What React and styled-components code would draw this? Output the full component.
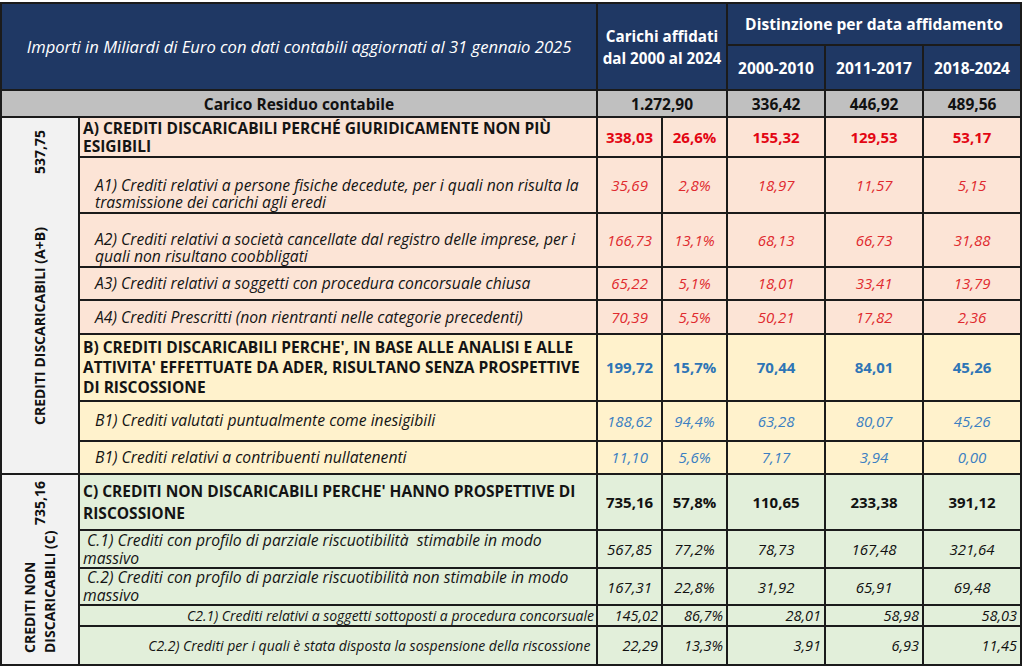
import React from "react";
import styled, { createGlobalStyle } from "styled-components";

const GlobalStyle = createGlobalStyle`
  html, body {
    margin: 0;
    padding: 0;
    background: #ffffff;
  }
  body {
    font-family: "Open Sans", "Liberation Sans", sans-serif;
    color: #111;
  }
`;

const fills = {
  A: "#fce4d6",
  B: "#fff2cc",
  C: "#e2efda",
};

const inks = {
  red: "#e30613",
  redSoft: "#e02a2f",
  blue: "#2e75b6",
  blueSoft: "#3b7fc2",
  ink: "#111111",
};

const groups = [
  {
    total: "537,75",
    label: ["CREDITI DISCARICABILI (A+B)"],
    height: 355,
    pad: [48, 12],
    rows: [
      {
        key: "A",
        fill: "A",
        head: true,
        h: 40,
        lh: 18,
        text: ["A) CREDITI DISCARICABILI PERCHÉ GIURIDICAMENTE NON PIÙ", "ESIGIBILI"],
        values: ["338,03", "26,6%", "155,32", "129,53", "53,17"],
        tone: "red",
      },
      {
        key: "A1",
        fill: "A",
        h: 55,
        valign: "bottom",
        text: [
          "A1) Crediti relativi a persone fisiche decedute, per i quali non risulta la",
          "trasmissione dei carichi agli eredi",
        ],
        values: ["35,69", "2,8%", "18,97", "11,57", "5,15"],
        tone: "redSoft",
      },
      {
        key: "A2",
        fill: "A",
        h: 54,
        valign: "bottom",
        text: [
          "A2) Crediti relativi a società cancellate dal registro delle imprese, per i",
          "quali non risultano coobbligati",
        ],
        values: ["166,73", "13,1%", "68,13", "66,73", "31,88"],
        tone: "redSoft",
      },
      {
        key: "A3",
        fill: "A",
        h: 33,
        text: ["A3) Crediti relativi a soggetti con procedura concorsuale chiusa"],
        values: ["65,22", "5,1%", "18,01", "33,41", "13,79"],
        tone: "redSoft",
      },
      {
        key: "A4",
        fill: "A",
        h: 34,
        text: ["A4) Crediti Prescritti (non rientranti nelle categorie precedenti)"],
        values: ["70,39", "5,5%", "50,21", "17,82", "2,36"],
        tone: "redSoft",
      },
      {
        key: "B",
        fill: "B",
        head: true,
        h: 66,
        lh: 20,
        text: [
          "B) CREDITI DISCARICABILI PERCHE', IN BASE ALLE ANALISI E ALLE",
          "ATTIVITA' EFFETTUATE DA ADER, RISULTANO SENZA PROSPETTIVE",
          "DI RISCOSSIONE",
        ],
        values: ["199,72", "15,7%", "70,44", "84,01", "45,26"],
        tone: "blue",
      },
      {
        key: "B1",
        fill: "B",
        h: 40,
        text: ["B1) Crediti valutati puntualmente come inesigibili"],
        values: ["188,62", "94,4%", "63,28", "80,07", "45,26"],
        tone: "blueSoft",
      },
      {
        key: "B2",
        fill: "B",
        h: 33,
        text: ["B1) Crediti relativi a contribuenti nullatenenti"],
        values: ["11,10", "5,6%", "7,17", "3,94", "0,00"],
        tone: "blueSoft",
      },
    ],
  },
  {
    total: "735,16",
    label: ["CREDITI NON", "DISCARICABILI (C)"],
    height: 189,
    pad: [11, 6],
    rows: [
      {
        key: "C",
        fill: "C",
        head: true,
        h: 56,
        lh: 22,
        text: ["C) CREDITI NON DISCARICABILI PERCHE' HANNO PROSPETTIVE DI", "RISCOSSIONE"],
        values: ["735,16", "57,8%", "110,65", "233,38", "391,12"],
        tone: "ink",
      },
      {
        key: "C1",
        fill: "C",
        h: 38,
        lh: 18,
        flat: true,
        text: [" C.1) Crediti con profilo di parziale riscuotibilità  stimabile in modo", "massivo"],
        values: ["567,85", "77,2%", "78,73", "167,48", "321,64"],
        tone: "ink",
      },
      {
        key: "C2",
        fill: "C",
        h: 37,
        lh: 17.5,
        flat: true,
        text: [" C.2) Crediti con profilo di parziale riscuotibilità non stimabile in modo", "massivo"],
        values: ["167,31", "22,8%", "31,92", "65,91", "69,48"],
        tone: "ink",
      },
      {
        key: "C21",
        fill: "C",
        h: 19,
        small: true,
        text: ["C2.1) Crediti relativi a soggetti sottoposti a procedura concorsuale"],
        values: ["145,02", "86,7%", "28,01", "58,98", "58,03"],
        tone: "ink",
      },
      {
        key: "C22",
        fill: "C",
        h: 39,
        small: true,
        text: ["C2.2) Crediti per i quali è stata disposta la sospensione della riscossione "],
        values: ["22,29", "13,3%", "3,91", "6,93", "11,45"],
        tone: "ink",
      },
    ],
  },
];

const Page = styled.div`
  padding-top: 2px;
`;

const Sheet = styled.table`
  width: 1020px;
  table-layout: fixed;
  border-collapse: collapse;

  th,
  td {
    border: 2px solid #1b1b1b;
    padding: 0;
    overflow: hidden;
  }
`;

const Row = styled.tr`
  height: ${(p) => p.$h}px;
`;

const HeadCell = styled.th`
  background: #1f3864;
  color: #ffffff;
  font-weight: ${(p) => (p.$italic ? 400 : 700)};
  font-style: ${(p) => (p.$italic ? "italic" : "normal")};
  font-size: ${(p) => p.$size || 15.5}px;
  line-height: 22px;
  text-align: center;
  vertical-align: middle;
  white-space: nowrap;
`;

const BandCell = styled.td`
  background: #c0c0c0;
  font-weight: 700;
  font-size: 15.5px;
  text-align: center;
  vertical-align: middle;
`;

const SideCell = styled.td`
  background: #f2f2f2;
  vertical-align: top;
`;

const SideText = styled.div`
  width: 100%;
  height: ${(p) => p.$h}px;
  display: flex;
  justify-content: space-between;
  align-items: center;
  writing-mode: vertical-rl;
  transform: rotate(180deg);
  padding-inline-start: ${(p) => p.$start}px;
  padding-inline-end: ${(p) => p.$end}px;
  box-sizing: border-box;
  font-weight: 700;
  font-size: 14px;
  line-height: 20px;
  text-align: start;
  white-space: nowrap;
`;

const DescCell = styled.td`
  background: ${(p) => fills[p.$fill]};
  font-size: ${(p) => (p.$head ? 15.5 : p.$small ? 14 : 15.7)}px;
  font-weight: ${(p) => (p.$head ? 700 : 400)};
  font-style: ${(p) => (p.$head ? "normal" : "italic")};
  line-height: ${(p) => p.$lh || 17}px;
  text-align: ${(p) => (p.$small ? "right" : "left")};
  vertical-align: ${(p) => p.$valign || "middle"};
  padding: ${(p) =>
    p.$head || p.$flat
      ? "0 2px 0 3px"
      : p.$small
      ? "0 2px 0 0"
      : p.$valign === "bottom"
      ? "0 2px 1px 15px"
      : "0 2px 0 15px"} !important;
  white-space: pre;
  color: #141414;
`;

const NumCell = styled.td`
  background: ${(p) => fills[p.$fill]};
  color: ${(p) => inks[p.$tone]};
  font-size: ${(p) => (p.$bold ? 15 : p.$small ? 14.5 : 15)}px;
  font-weight: ${(p) => (p.$bold ? 700 : 400)};
  font-style: ${(p) => (p.$bold ? "normal" : "italic")};
  text-align: ${(p) => (p.$small ? "right" : "center")};
  vertical-align: middle;
  padding: ${(p) => (p.$small ? "0 3px 0 0" : "0")} !important;
  white-space: nowrap;
`;

const Lines = ({ lines }) =>
  lines.map((line, i) => (
    <React.Fragment key={i}>
      {i > 0 && <br />}
      {line}
    </React.Fragment>
  ));

const App = () => {
  return (
    <Page>
      <GlobalStyle />
      <Sheet>
        <colgroup>
          <col style={{ width: 78 }} />
          <col style={{ width: 518 }} />
          <col style={{ width: 65 }} />
          <col style={{ width: 65 }} />
          <col style={{ width: 98 }} />
          <col style={{ width: 98 }} />
          <col style={{ width: 98 }} />
        </colgroup>
        <thead>
          <Row $h={42}>
            <HeadCell colSpan={2} rowSpan={2} $italic $size={16.6}>
              Importi in Miliardi di Euro con dati contabili aggiornati al 31 gennaio 2025
            </HeadCell>
            <HeadCell colSpan={2} rowSpan={2} $size={15.2}>
              Carichi affidati
              <br />
              dal 2000 al 2024
            </HeadCell>
            <HeadCell colSpan={3} $size={15.6}>
              Distinzione per data affidamento
            </HeadCell>
          </Row>
          <Row $h={45}>
            <HeadCell>2000-2010</HeadCell>
            <HeadCell>2011-2017</HeadCell>
            <HeadCell>2018-2024</HeadCell>
          </Row>
          <Row $h={27}>
            <BandCell colSpan={2}>Carico Residuo contabile</BandCell>
            <BandCell colSpan={2}>1.272,90</BandCell>
            <BandCell>336,42</BandCell>
            <BandCell>446,92</BandCell>
            <BandCell>489,56</BandCell>
          </Row>
        </thead>
        <tbody>
          {groups.map((group) =>
            group.rows.map((row, i) => (
              <Row key={row.key} $h={row.h}>
                {i === 0 && (
                  <SideCell rowSpan={group.rows.length}>
                    <SideText $h={group.height} $start={group.pad[0]} $end={group.pad[1]}>
                      <span>
                        <Lines lines={group.label} />
                      </span>
                      <span>{group.total}</span>
                    </SideText>
                  </SideCell>
                )}
                <DescCell
                  $fill={row.fill}
                  $head={row.head}
                  $small={row.small}
                  $flat={row.flat}
                  $lh={row.lh}
                  $valign={row.valign}
                >
                  <Lines lines={row.text} />
                </DescCell>
                {row.values.map((v, j) => (
                  <NumCell
                    key={j}
                    $fill={row.fill}
                    $tone={row.tone}
                    $bold={row.head}
                    $small={row.small}
                  >
                    {v}
                  </NumCell>
                ))}
              </Row>
            ))
          )}
        </tbody>
      </Sheet>
    </Page>
  );
};

export default App;
